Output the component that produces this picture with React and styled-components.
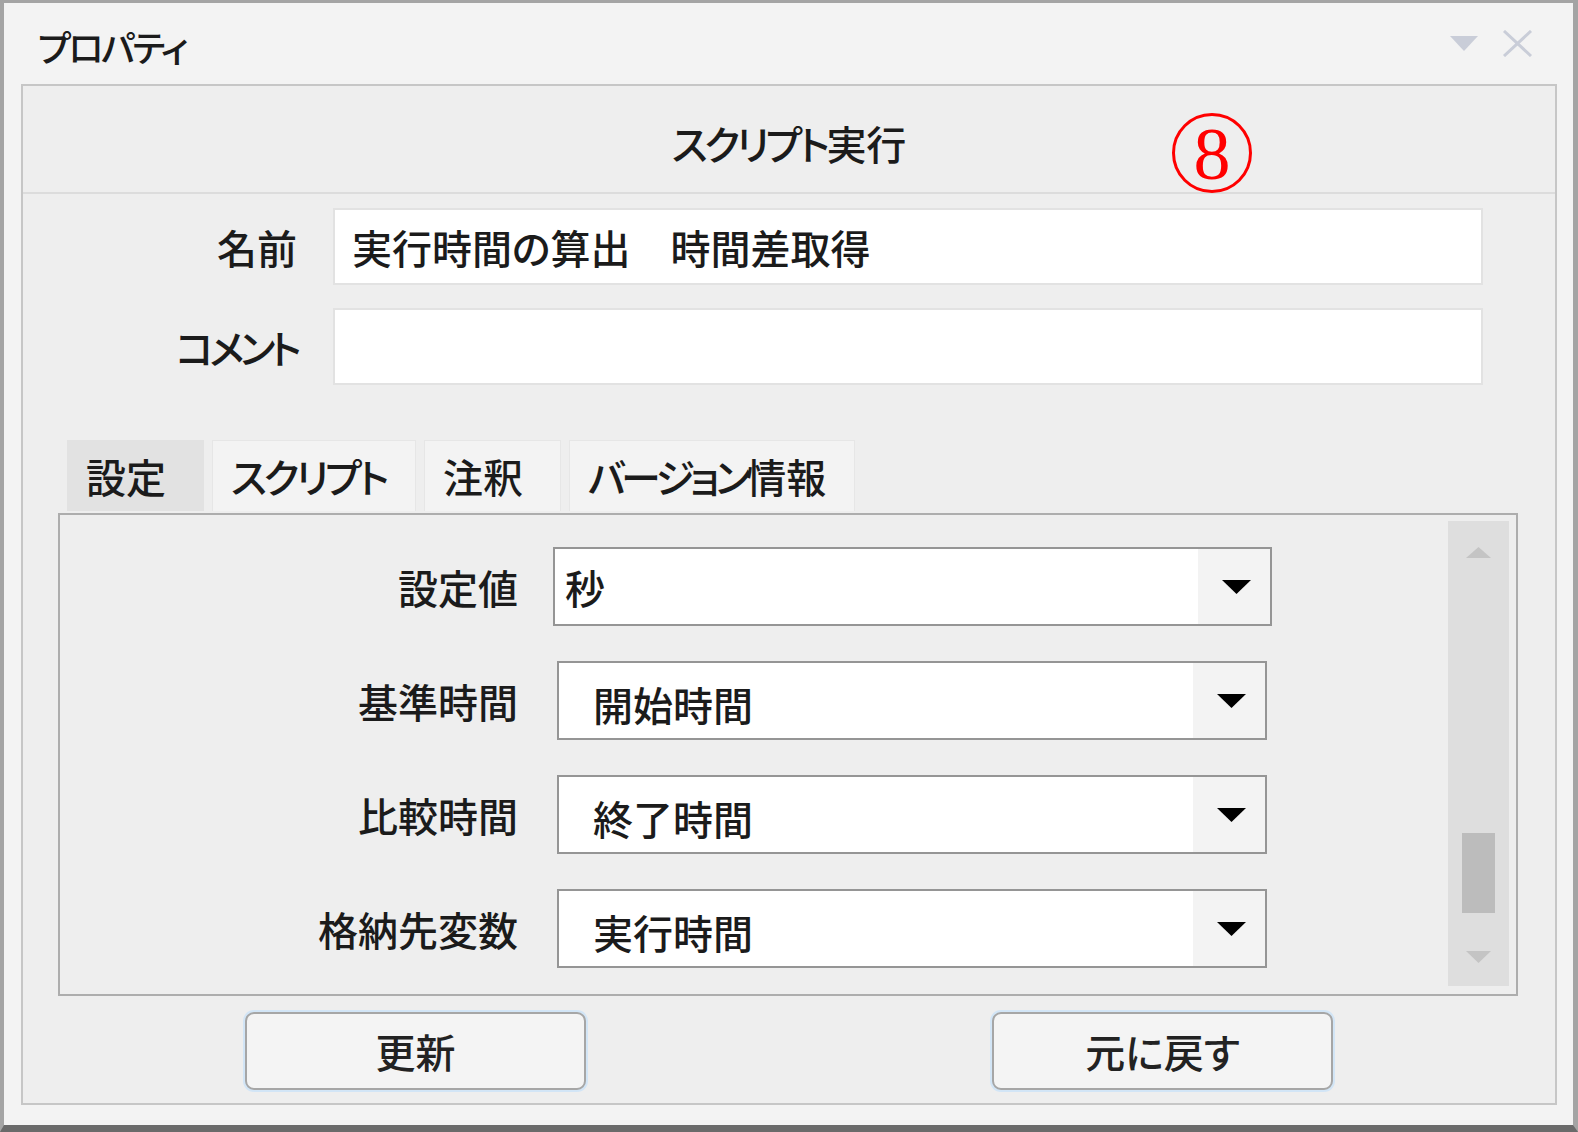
import { Fragment } from 'react'
import styled, { createGlobalStyle } from 'styled-components'

const GlobalStyle = createGlobalStyle`
  html, body {
    margin: 0;
    padding: 0;
    background: #f3f3f3;
  }
  body {
    font-family: 'Noto Sans CJK JP', 'Noto Sans', sans-serif;
    color: #1b1b1b;
  }
  * {
    box-sizing: border-box;
  }
`

const Window = styled.div`
  width: 1578px;
  height: 1132px;
  display: flex;
  flex-direction: column;
  background: #f3f3f3;
  border-style: solid;
  border-color: #a4a4a4;
  border-bottom-color: #6a6a6a;
  border-width: 3px 5px 7px 4px;
  font-feature-settings: 'palt';
  font-weight: 500;
`

// katakana in the reference UI font is narrower than in Noto
const Kana = styled.span`
  letter-spacing: ${(p) => p.$ls ?? -3.5}px;
`

const TitleBar = styled.div`
  height: 81px;
  display: flex;
  align-items: center;
  justify-content: space-between;
  padding: 4px 40px 0 34px;
`

const Title = styled.span`
  font-size: 36px;
  line-height: 1;
`

const TitleIcons = styled.div`
  display: flex;
  align-items: center;
  gap: 24px;
  margin-top: -4px;
`

const InnerPanel = styled.div`
  flex: 1;
  display: flex;
  flex-direction: column;
  margin: 0 16px 20px 17px;
  border: 2px solid #c6c6c6;
  background: #eeeeee;
`

const Header = styled.div`
  position: relative;
  height: 108px;
  display: flex;
  align-items: center;
  justify-content: center;
  padding-top: 8px;
  border-bottom: 2px solid #dcdcdc;
  font-size: 40px;
`

const Marker = styled.div`
  position: absolute;
  left: 1149px;
  top: 27px;
  width: 80px;
  height: 80px;
  border: 3px solid #ff0000;
  border-radius: 50%;
  display: flex;
  align-items: center;
  justify-content: center;
  color: #ff0000;
  font-family: 'Liberation Serif', serif;
  font-weight: 400;
  font-size: 74px;
  line-height: 1;
  padding-top: 2px;
`

const Form = styled.div`
  display: grid;
  grid-template-columns: 274px 1150px;
  column-gap: 36px;
  row-gap: 23px;
  align-items: center;
  padding-top: 14px;
`

const Label = styled.div`
  text-align: right;
  font-size: 40px;
  line-height: 1;
`

const TextBox = styled.div`
  height: 77px;
  display: flex;
  align-items: center;
  padding-left: 17px;
  background: #ffffff;
  border: 2px solid #e2e2e2;
  font-size: 40px;
  white-space: pre;
`

const TabStrip = styled.div`
  display: flex;
  gap: 8px;
  margin: 55px 0 2px 44px;
`

const Tab = styled.div`
  width: ${(p) => p.$w}px;
  height: 71px;
  display: flex;
  align-items: center;
  padding-left: 18px;
  font-size: 40px;
  background: ${(p) => (p.$active ? '#e2e2e2' : '#f3f3f3')};
  border: 1px solid ${(p) => (p.$active ? '#e2e2e2' : '#e6e6e6')};
  border-bottom: none;
`

const TabPanel = styled.div`
  height: 483px;
  margin: 0 37px 0 35px;
  border: 2px solid #adadad;
  background: #eeeeee;
  display: grid;
  grid-template-columns: 1fr 68px;
`

const Fields = styled.div`
  display: grid;
  grid-template-columns: 458px 1fr;
  grid-auto-rows: 79px;
  column-gap: 35px;
  row-gap: 35px;
  align-items: center;
  padding-top: 32px;
`

const Select = styled.div`
  width: ${(p) => (p.$first ? 719 : 710)}px;
  margin-left: ${(p) => (p.$first ? 0 : 4)}px;
  height: 79px;
  display: flex;
  background: #ffffff;
  border: 2px solid #959595;
`

const SelectValue = styled.div`
  flex: 1;
  display: flex;
  align-items: center;
  padding-left: ${(p) => (p.$first ? 10 : 34)}px;
  padding-top: ${(p) => (p.$first ? 0 : 6)}px;
  font-size: 40px;
`

const SelectButton = styled.div`
  width: 72px;
  display: flex;
  align-items: center;
  justify-content: center;
  background: #f3f3f3;
  padding-left: 4px;
`

const Scrollbar = styled.div`
  margin: 6px 7px 8px 0;
  background: #dedede;
  display: flex;
  flex-direction: column;
  align-items: center;
  padding: 26px 0 23px;
`

const Thumb = styled.div`
  width: 33px;
  height: 80px;
  margin-top: auto;
  margin-bottom: 38px;
  background: #bcbcbc;
`

const ButtonRow = styled.div`
  display: flex;
  gap: 406px;
  margin-top: 16px;
  padding-left: 222px;
`

const Button = styled.div`
  width: 341px;
  height: 78px;
  display: flex;
  align-items: center;
  justify-content: center;
  background: #f4f4f4;
  border: 2px solid #a6a6a6;
  border-radius: 9px;
  box-shadow: 0 0 0 2px #d2e5f6;
  font-size: 40px;
  color: #222222;
`

const ArrowDown = ({ color = '#000', w = 29, h = 14 }) => (
  <svg width={w} height={h} viewBox={`0 0 ${w} ${h}`}>
    <polygon points={`0,0 ${w},0 ${w / 2},${h}`} fill={color} />
  </svg>
)

const ArrowUp = ({ color, w, h }) => (
  <svg width={w} height={h} viewBox={`0 0 ${w} ${h}`}>
    <polygon points={`0,${h} ${w},${h} ${w / 2},0`} fill={color} />
  </svg>
)

const CloseIcon = () => (
  <svg width="31" height="27" viewBox="0 0 31 27">
    <path d="M2 1 L29 26 M29 1 L2 26" stroke="#c9cdd8" strokeWidth="3" />
  </svg>
)

const tabs = [
  { label: <>設定</>, key: 'settings', w: 137, active: true },
  { label: <Kana>スクリプト</Kana>, key: 'script', w: 204 },
  { label: <>注釈</>, key: 'note', w: 137 },
  { label: <><Kana $ls={-4.5}>バージョン</Kana>情報</>, key: 'version', w: 286 },
]

const fields = [
  { label: '設定値', value: '秒' },
  { label: '基準時間', value: '開始時間' },
  { label: '比較時間', value: '終了時間' },
  { label: '格納先変数', value: '実行時間' },
]

export default function App() {
  return (
    <>
      <GlobalStyle />
      <Window>
        <TitleBar>
          <Title>
            <Kana $ls={-2.5}>プロパティ</Kana>
          </Title>
          <TitleIcons>
            <ArrowDown color="#c9cdd8" w={28} h={15} />
            <CloseIcon />
          </TitleIcons>
        </TitleBar>
        <InnerPanel>
          <Header>
            <span>
              <Kana>スクリプト</Kana>実行
            </span>
            <Marker>8</Marker>
          </Header>
          <Form>
            <Label>名前</Label>
            <TextBox>実行時間の算出　時間差取得</TextBox>
            <Label>
              <Kana $ls={-4.5}>コメント</Kana>
            </Label>
            <TextBox />
          </Form>
          <TabStrip>
            {tabs.map((t) => (
              <Tab key={t.key} $w={t.w} $active={t.active}>
                {t.label}
              </Tab>
            ))}
          </TabStrip>
          <TabPanel>
            <Fields>
              {fields.map((f, i) => (
                <Fragment key={f.label}>
                  <Label>{f.label}</Label>
                  <Select $first={i === 0}>
                    <SelectValue $first={i === 0}>{f.value}</SelectValue>
                    <SelectButton>
                      <ArrowDown />
                    </SelectButton>
                  </Select>
                </Fragment>
              ))}
            </Fields>
            <Scrollbar>
              <ArrowUp color="#c4c4c4" w={25} h={11} />
              <Thumb />
              <ArrowDown color="#c4c4c4" w={25} h={12} />
            </Scrollbar>
          </TabPanel>
          <ButtonRow>
            <Button>更新</Button>
            <Button>元に戻す</Button>
          </ButtonRow>
        </InnerPanel>
      </Window>
    </>
  )
}
